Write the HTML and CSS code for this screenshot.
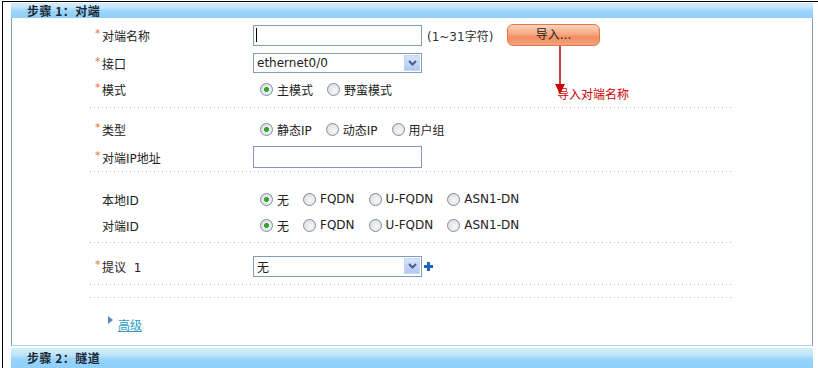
FILE: index.html
```html
<!DOCTYPE html>
<html>
<head>
    <meta charset="UTF-8">
    <title>步骤 1：对端</title>
    <link rel="stylesheet" href="styles.css">
</head>
<body>
<div class="frame">
    <div class="step-head">步骤 1：对端</div>
    <div class="panel">
        <div class="group g1">
            <div class="row">
                <div class="label"><span class="star">*</span>对端名称</div>
                <div class="field">
                    <div class="text-input"><span class="caret"></span></div>
                    <span class="hint">(1~31字符)</span>
                    <span class="btn-import">导入...</span>
                </div>
            </div>
            <div class="row gap">
                <div class="label"><span class="star">*</span>接口</div>
                <div class="field">
                    <div class="select">
                        <span>ethernet0/0</span>
                        <span class="select-btn"><svg width="9" height="6" viewBox="0 0 9 6"><path d="M1 1 L4.5 4.5 L8 1" fill="none" stroke="#4b5f86" stroke-width="2"/></svg></span>
                    </div>
                </div>
            </div>
            <div class="row">
                <div class="label"><span class="star">*</span>模式</div>
                <div class="field radios">
                    <span class="opt"><span class="radio on"></span>主模式</span>
                    <span class="opt"><span class="radio"></span>野蛮模式</span>
                </div>
            </div>
        </div>
        <div class="sep"></div>

        <div class="group g2">
            <div class="row">
                <div class="label"><span class="star">*</span>类型</div>
                <div class="field radios">
                    <span class="opt"><span class="radio on"></span>静态IP</span>
                    <span class="opt"><span class="radio"></span>动态IP</span>
                    <span class="opt"><span class="radio"></span>用户组</span>
                </div>
            </div>
            <div class="row gap">
                <div class="label"><span class="star">*</span>对端IP地址</div>
                <div class="field">
                    <div class="text-input ip"></div>
                </div>
            </div>
        </div>
        <div class="sep"></div>

        <div class="group g3">
            <div class="row">
                <div class="label"><span class="star"></span>本地ID</div>
                <div class="field radios">
                    <span class="opt"><span class="radio on"></span>无</span>
                    <span class="opt"><span class="radio"></span>FQDN</span>
                    <span class="opt"><span class="radio"></span>U-FQDN</span>
                    <span class="opt"><span class="radio"></span>ASN1-DN</span>
                </div>
            </div>
            <div class="row">
                <div class="label"><span class="star"></span>对端ID</div>
                <div class="field radios">
                    <span class="opt"><span class="radio on"></span>无</span>
                    <span class="opt"><span class="radio"></span>FQDN</span>
                    <span class="opt"><span class="radio"></span>U-FQDN</span>
                    <span class="opt"><span class="radio"></span>ASN1-DN</span>
                </div>
            </div>
        </div>
        <div class="sep"></div>

        <div class="group g4">
            <div class="row">
                <div class="label"><span class="star">*</span>提议&nbsp;&nbsp;1</div>
                <div class="field">
                    <div class="select">
                        <span>无</span>
                        <span class="select-btn"><svg width="9" height="6" viewBox="0 0 9 6"><path d="M1 1 L4.5 4.5 L8 1" fill="none" stroke="#4b5f86" stroke-width="2"/></svg></span>
                    </div>
                    <svg class="plus" width="9" height="9" viewBox="0 0 9 9"><path d="M3 0h3v3h3v3h-3v3h-3v-3h-3v-3h3z" fill="#1a66c2"/></svg>
                </div>
            </div>
        </div>
        <div class="sep"></div>
        <div class="spacer"></div>
        <div class="sep"></div>

        <div class="group g5">
            <div class="row">
                <span class="tri"></span><a class="more" href="#">高级</a>
            </div>
        </div>

        <!-- 提示: 导入对端名称 -->
        <svg class="arrow" width="12" height="50" viewBox="0 0 12 50"><path d="M6 0 V40" stroke="#c80000" stroke-width="1.5"/><path d="M1 38 H11 L6 48 Z" fill="#c80000"/></svg>
        <span class="note">导入对端名称</span>
    </div>
    <div class="step-head next">步骤 2：隧道</div>
</div>
</body>
</html>
```

FILE: styles.css
```css
body {
    margin: 0;
    background-color: #fff;
    font-family: "DejaVu Sans", "Noto Sans CJK SC", sans-serif;
    font-size: 12px;
    color: #222;
}

.frame {
    margin: 1px 0 0 2px;
    padding: 1px 0 0 8px;
    border-top: 1px solid #000;
    border-left: 1px solid #000;
    height: 367px;
    box-sizing: border-box;
}

.step-head {
    width: 802px;
    height: 15px;
    line-height: 15px;
    padding-left: 16px;
    box-sizing: border-box;
    background: linear-gradient(#d4ecfb 0%, #bfe3fa 35%, #98d3fa 55%, #8fcff9 100%);
    font-family: "Noto Sans CJK SC", sans-serif;
    font-weight: bold;
    color: #1b2733;
    letter-spacing: 0.5px;
}

.step-head.next {
    margin-top: 2px;
    height: 20px;
    line-height: 20px;
}

.panel {
    position: relative;
    width: 802px;
    height: 328px;
    padding-left: 78px;
    box-sizing: border-box;
    border-left: 1px solid #8d9cb3;
    border-right: 1px solid #8d9cb3;
    border-bottom: 1px solid #a8d6f2;
}

.group {
    width: 643px;
    padding-left: 5px;
    box-sizing: border-box;
}

.g1 { padding-top: 4px; padding-bottom: 5px; }
.g2 { padding-top: 8px; padding-bottom: 1px; }
.g3 { padding-top: 14px; padding-bottom: 4px; }
.g4 { padding-top: 10px; padding-bottom: 5px; }
.g5 { padding-top: 12px; }

.sep {
    width: 643px;
    height: 1px;
    background: repeating-linear-gradient(to right, #b8b8b8 0 1px, transparent 1px 4px);
}

.spacer {
    height: 12px;
}

.row {
    display: flex;
    align-items: center;
    height: 26px;
}

.row.gap {
    margin-top: 2px;
}

.label {
    width: 158px;
    display: flex;
    align-items: center;
    flex-shrink: 0;
}

.star {
    width: 7px;
    color: #e0782c;
    font-size: 11px;
    position: relative;
    top: -2px;
}

.field {
    display: flex;
    align-items: center;
}

.text-input {
    width: 169px;
    height: 21px;
    border: 1px solid #7f9db9;
    box-sizing: border-box;
    background-color: #fff;
    display: flex;
    align-items: center;
    padding-left: 2px;
}

.text-input.ip {
    height: 22px;
    border-color: #8a92c2;
}

.caret {
    width: 1px;
    height: 14px;
    background-color: #000;
}

.hint {
    width: 80px;
    margin-left: 5px;
    color: #333;
}

.btn-import {
    width: 93px;
    height: 22px;
    line-height: 20px;
    text-align: center;
    border: 1px solid #e0794a;
    border-radius: 6px;
    box-sizing: border-box;
    background: linear-gradient(#fcd3bd 0%, #f7a983 45%, #f38e60 60%, #f6a27c 100%);
    color: #222;
}

.select {
    width: 169px;
    height: 20px;
    border: 1px solid #7f9db9;
    box-sizing: border-box;
    display: flex;
    align-items: center;
    justify-content: space-between;
    padding-left: 3px;
    background-color: #fff;
}

.select-btn {
    width: 16px;
    height: 16px;
    margin-right: 1px;
    box-sizing: border-box;
    border: 1px solid #c6d6f6;
    background: linear-gradient(#d6e3fb, #b2c8f4);
    display: flex;
    align-items: center;
    justify-content: center;
}

.g4 .select {
    height: 21px;
}

.plus {
    margin-left: 2px;
}

.radios {
    padding-left: 7px;
}

.opt {
    display: flex;
    align-items: center;
    margin-right: 14px;
}

.radio {
    width: 13px;
    height: 13px;
    margin-right: 4px;
    border: 1px solid #7a8ca6;
    border-radius: 50%;
    box-sizing: border-box;
    background: radial-gradient(circle at 60% 60%, #f8f8f8 0, #e4e4e4 60%, #cfcfcf 100%);
}

.radio.on {
    background: radial-gradient(circle, #2faa2f 0, #2faa2f 2.2px, transparent 2.8px),
                radial-gradient(circle at 60% 60%, #f8f8f8 0, #e4e4e4 60%, #cfcfcf 100%);
}

.tri {
    width: 0;
    height: 0;
    margin-left: 13px;
    margin-right: 5px;
    margin-top: -6px;
    border-left: 5px solid #5a86b8;
    border-top: 4px solid transparent;
    border-bottom: 4px solid transparent;
}

.more {
    color: #2d9cc6;
    text-decoration: underline;
    margin-top: 2px;
}

.arrow {
    position: absolute;
    left: 542px;
    top: 28px;
}

.note {
    position: absolute;
    left: 545px;
    top: 70px;
    color: #cc0000;
    line-height: 14px;
}
```
